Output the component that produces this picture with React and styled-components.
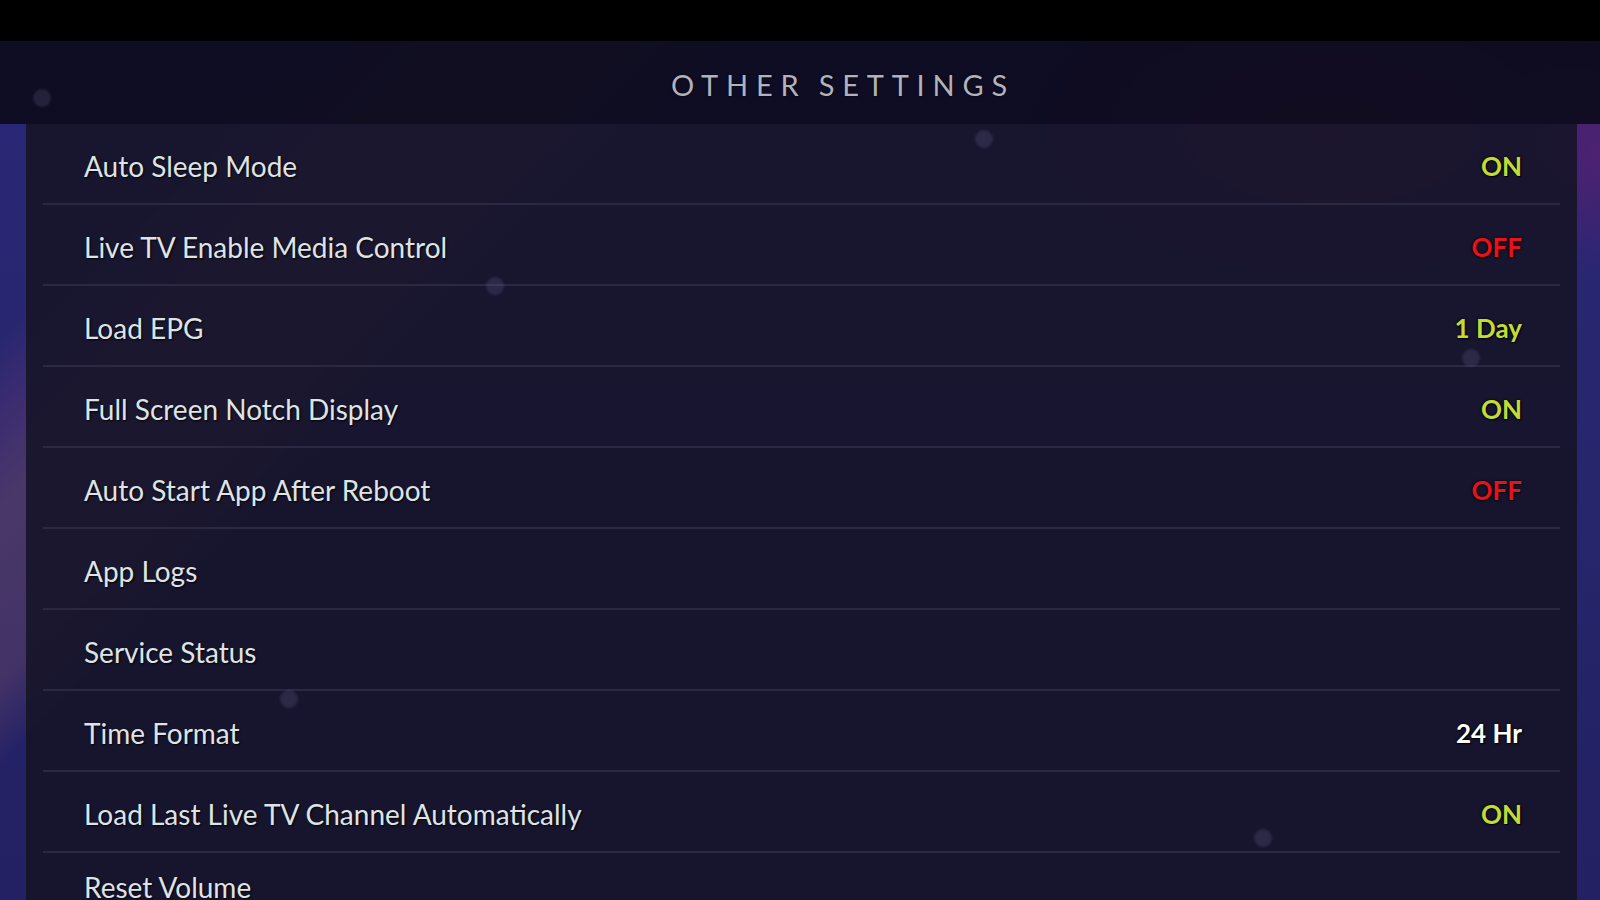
import React from 'react';
import styled, { createGlobalStyle } from 'styled-components';

const GlobalStyle = createGlobalStyle`
  html, body {
    margin: 0;
    padding: 0;
    background: #000;
  }
  * {
    box-sizing: border-box;
  }
`

const Screen = styled.div`
  width: 1600px;
  height: 900px;
  display: flex;
  flex-direction: column;
  background: #000;
  overflow: hidden;
  font-family: Lato, "Open Sans", sans-serif;
`

const TopBar = styled.div`
  height: 41px;
  flex-shrink: 0;
  background: #000;
`

const Stage = styled.div`
  position: relative;
  flex: 1;
  display: flex;
  flex-direction: column;
  overflow: hidden;
  background:
    radial-gradient(ellipse 460px 240px at 1330px 90px, rgba(120, 30, 85, 0.6), transparent 75%),
    radial-gradient(ellipse 120px 160px at 1600px 110px, rgba(90, 30, 120, 0.6), transparent 80%),
    linear-gradient(135deg,
      transparent 0%,
      transparent 12%,
      rgba(95, 55, 120, 0.35) 15%,
      rgba(130, 85, 100, 0.38) 19%,
      rgba(125, 80, 100, 0.34) 26%,
      transparent 29.5%,
      transparent 100%),
    linear-gradient(180deg, #2a2878 0%, #28266e 40%, #232163 100%);
`

const Header = styled.div`
  height: 83px;
  flex-shrink: 0;
  display: flex;
  align-items: center;
  justify-content: center;
  padding-left: 86px;
  padding-top: 3px;
  background: rgba(11, 10, 26, 0.9);
`

const Title = styled.h1`
  margin: 0;
  font-family: Lato, "Open Sans", sans-serif;
  font-weight: 400;
  font-size: 29px;
  letter-spacing: 7.8px;
  word-spacing: -3px;
  color: #b2b2bb;
  text-shadow: 0 0 2px rgba(0, 0, 0, 0.8);
`

const Body = styled.div`
  flex: 1;
  display: flex;
  padding: 0 23px 0 26px;
`

const Panel = styled.div`
  flex: 1;
  display: flex;
  flex-direction: column;
  padding: 0 17px;
  background: rgba(22, 20, 40, 0.9);
`

const Row = styled.div`
  height: 81px;
  flex-shrink: 0;
  display: flex;
  align-items: center;
  justify-content: space-between;
  padding: 4px 38px ${props => (props.$last ? '16px' : '0')} 41px;
  border-bottom: 2px solid rgba(58, 56, 84, 0.55);
`

const Label = styled.span`
  font-size: 28px;
  color: #dfe3e6;
  text-shadow: 1px 1px 2px rgba(0, 0, 0, 0.9);
`

const VALUE_COLORS = {
  on: '#c3dc35',
  off: '#e8121c',
  plain: '#ffffff',
}

const Value = styled.span`
  font-size: 26px;
  font-weight: 700;
  color: ${props => VALUE_COLORS[props.$tone]};
  text-shadow: 0 0 3px #000, 1px 1px 1px #000;
`

const Bokeh = styled.span`
  position: absolute;
  width: ${props => props.$size}px;
  height: ${props => props.$size}px;
  border-radius: 50%;
  background: rgba(150, 150, 190, 0.16);
  filter: blur(1px);
  pointer-events: none;
`

const settings = [
  { label: 'Auto Sleep Mode', value: 'ON', tone: 'on' },
  { label: 'Live TV Enable Media Control', value: 'OFF', tone: 'off' },
  { label: 'Load EPG', value: '1 Day', tone: 'on' },
  { label: 'Full Screen Notch Display', value: 'ON', tone: 'on' },
  { label: 'Auto Start App After Reboot', value: 'OFF', tone: 'off' },
  { label: 'App Logs' },
  { label: 'Service Status' },
  { label: 'Time Format', value: '24 Hr', tone: 'plain' },
  { label: 'Load Last Live TV Channel Automatically', value: 'ON', tone: 'on' },
  { label: 'Reset Volume' },
]

// faint light dots scattered over the backdrop
const dots = [
  { x: 33, y: 48, s: 18 },
  { x: 975, y: 89, s: 18 },
  { x: 486, y: 236, s: 18 },
  { x: 1462, y: 308, s: 18 },
  { x: 280, y: 649, s: 18 },
  { x: 1254, y: 788, s: 18 },
]

export default function App() {
  return (
    <>
      <GlobalStyle />
      <Screen>
        <TopBar />
        <Stage>
          <Header>
            <Title>OTHER SETTINGS</Title>
          </Header>
          <Body>
            <Panel>
              {settings.map((item, i) => (
                <Row key={item.label} $last={i === settings.length - 1}>
                  <Label>{item.label}</Label>
                  {item.value && <Value $tone={item.tone}>{item.value}</Value>}
                </Row>
              ))}
            </Panel>
          </Body>
          {dots.map((d, i) => (
            <Bokeh key={i} $size={d.s} style={{ left: d.x, top: d.y }} />
          ))}
        </Stage>
      </Screen>
    </>
  )
}
